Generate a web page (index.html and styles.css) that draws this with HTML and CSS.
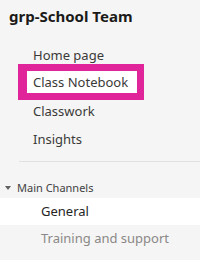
FILE: index.html
```html
<!DOCTYPE html>
<html>
<head>
<meta charset="utf-8">
<link rel="stylesheet" href="styles.css">
</head>
<body>
<div class="panel">
  <div class="team-title">grp-School Team</div>
  <nav class="tabs">
    <div class="tab">Home page</div>
    <div class="tab-row"><span class="tab tab-hl">Class Notebook</span></div>
    <div class="tab">Classwork</div>
    <div class="tab">Insights</div>
  </nav>
  <div class="divider"></div>
  <div class="group">
    <svg class="caret" width="6" height="4" viewBox="0 0 6 4"><path d="M0 0 H6 L3 4 Z" fill="#616161"/></svg>
    <span>Main Channels</span>
  </div>
  <div class="channel active">General</div>
  <div class="channel muted">Training and support</div>
</div>
</body>
</html>
```

FILE: styles.css
```css
html, body {
  margin: 0;
  padding: 0;
  background: #f5f5f5;
}
body {
  font-family: "Noto Sans", "Open Sans", sans-serif;
  color: #252423;
  width: 200px;
  height: 260px;
  overflow: hidden;
}
.panel {
  display: flex;
  flex-direction: column;
}
.team-title {
  font-weight: 700;
  font-size: 15px;
  line-height: 20px;
  padding: 6px 0 0 9px;
  color: #1b1a19;
}
.tabs {
  display: flex;
  flex-direction: column;
  padding: 15px 0 0 27px;
}
.tab {
  font-size: 13px;
  height: 28px;
  line-height: 28px;
  padding-left: 6px;
  color: #3b3a39;
}
.tab-row {
  height: 28px;
  display: flex;
  align-items: flex-start;
}
.tab-hl {
  display: inline-block;
  height: 22px;
  line-height: 22px;
  margin-top: 2px;
  padding-right: 9px;
  background: #ffffff;
  box-shadow: 0 0 0 7px #e0259b, -2px 0 0 7px #e0259b;
}
.divider {
  height: 1px;
  background: #e1e1e1;
  margin: 8px 0 0 19px;
}
.group {
  display: flex;
  align-items: center;
  gap: 6px;
  padding: 18px 0 0 5px;
  font-size: 11px;
  line-height: 16px;
  color: #424242;
}
.caret {
  display: block;
}
.channel {
  font-size: 13px;
  height: 27px;
  line-height: 27px;
  padding-left: 41px;
}
.channel.active {
  background: #ffffff;
  margin-top: 2px;
  color: #242424;
}
.channel.muted {
  color: #8a8886;
}
```
